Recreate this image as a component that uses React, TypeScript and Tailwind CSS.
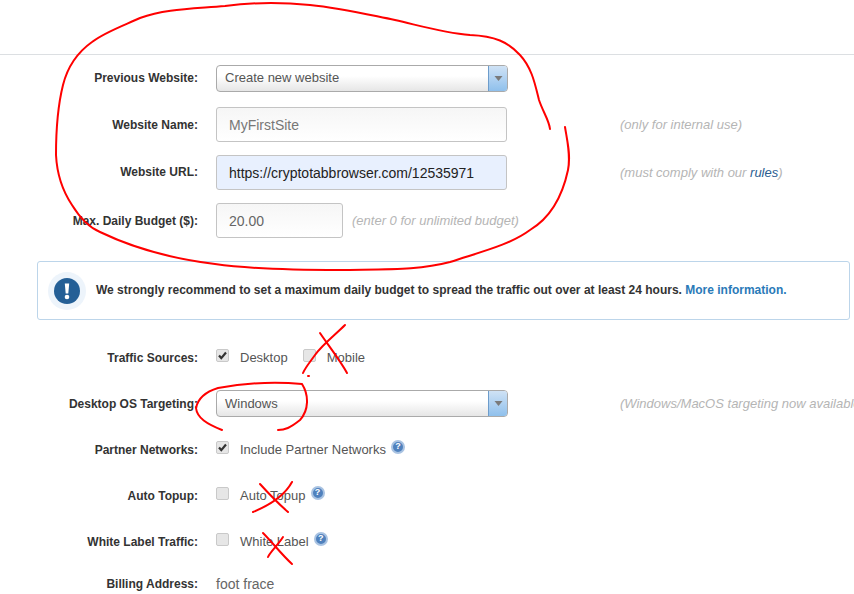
function Label({ children, className = "" }: { children: string; className?: string }) {
  return (
    <div className={`w-[198px] shrink-0 text-right text-[12px] font-bold text-[#333] ${className}`}>{children}</div>
  );
}

function Hint({ children, className }: { children: React.ReactNode; className: string }) {
  return <div className={`shrink-0 whitespace-nowrap text-[13px] italic text-[#b5b5b5] ${className}`}>{children}</div>;
}

function Select({ value, leading }: { value: string; leading: string }) {
  return (
    <div className="ml-[18px] flex h-[27px] w-[292px] shrink-0 overflow-hidden rounded-[4px] border border-[#aaa] bg-gradient-to-b from-white from-40% to-[#e6e6e6] text-[13px] text-[#555]">
      <div className={`flex-1 pl-[8px] ${leading}`}>{value}</div>
      <div className="flex w-[19px] items-center justify-center border-l border-[#6d9ccb] bg-gradient-to-b from-[#cfe2f5] to-[#8fc0ec]">
        <svg width="9" height="7" viewBox="0 0 9 7">
          <path d="M0.5 1h8L4.5 6z" fill="#7a7a7a" />
        </svg>
      </div>
    </div>
  );
}

function Input({ value, className }: { value: string; className: string }) {
  return (
    <div className={`ml-[18px] h-[35px] shrink-0 rounded-[3px] border border-[#c4c4c4] pl-[12px] text-[14px] leading-[35px] ${className}`}>
      {value}
    </div>
  );
}

function Check({ checked, className = "ml-[18px]" }: { checked?: boolean; className?: string }) {
  return (
    <span className={`mb-[5px] flex h-[13px] w-[13px] shrink-0 items-center justify-center rounded-[2px] border border-[#c9c9c9] bg-[#e6e6e6] ${className}`}>
      {checked && (
        <svg width="11" height="11" viewBox="0 0 11 11">
          <path d="M2 5.5l2.3 2.6L9 2.5" fill="none" stroke="#333" strokeWidth="2.2" />
        </svg>
      )}
    </span>
  );
}

function Help() {
  return (
    <span className="mb-[7px] ml-[5px] flex h-[14px] w-[14px] shrink-0 items-center justify-center rounded-full border-2 border-[#a9c3e2] bg-[#4f81bd] text-[9px] leading-none font-bold text-white">
      ?
    </span>
  );
}

function CheckRow({
  label,
  text,
  checked,
  mt
}: {
  label: string;
  text: string;
  checked?: boolean;
  mt: string;
}) {
  return (
    <div className={`flex h-[20px] items-center ${mt}`}>
      <Label>{label}</Label>
      <Check checked={checked} />
      <span className="ml-[11px] text-[13px] text-[#555]">{text}</span>
      <Help />
    </div>
  );
}

export default function App() {
  return (
    <div className="relative h-[594px] w-[854px] overflow-hidden bg-white font-['Liberation_Sans',Arial,sans-serif]">
      <div className="h-[55px] border-b border-[#dcdfe2]" />

      <div className="mt-[10px] flex items-center">
        <Label className="pb-[2px]">Previous Website:</Label>
        <Select value="Create new website" leading="leading-[24px]" />
      </div>

      <div className="mt-[15px] flex items-center">
        <Label>Website Name:</Label>
        <Input value="MyFirstSite" className="w-[291px] bg-gradient-to-b from-[#f6f6f6] to-white text-[#777]" />
        <Hint className="ml-[113px]">(only for internal use)</Hint>
      </div>

      <div className="mt-[13px] flex items-center">
        <Label className="pb-[2px]">Website URL:</Label>
        <Input value="https://cryptotabbrowser.com/12535971" className="w-[291px] bg-[#e8f0fe] text-[#222]" />
        <Hint className="ml-[113px]">
          (must comply with our <span className="text-[#2a5d8f]">rules</span>)
        </Hint>
      </div>

      <div className="mt-[13px] flex items-center">
        <Label>Max. Daily Budget ($):</Label>
        <Input value="20.00" className="w-[127px] bg-gradient-to-b from-[#f6f6f6] to-white text-[#666]" />
        <Hint className="ml-[9px]">(enter 0 for unlimited budget)</Hint>
      </div>

      <div className="mt-[23px] ml-[37px] flex h-[59px] w-[813px] items-center rounded-[3px] border border-[#bcd5ea] pl-[10px]">
        <div className="flex h-[38px] w-[38px] shrink-0 items-center justify-center rounded-full bg-[#edf4fb]">
          <div className="flex h-[26px] w-[26px] items-center justify-center rounded-full bg-[#245f96]">
            <svg width="6" height="18" viewBox="0 0 6 18">
              <path d="M0.8 1.5h4.4L4.3 11.5H1.7z" fill="#fff" />
              <circle cx="3" cy="15" r="2.3" fill="#fff" />
            </svg>
          </div>
        </div>
        <div className="ml-[10px] pb-[2px] text-[12px] font-bold whitespace-nowrap text-[#333]">
          We strongly recommend to set a maximum daily budget to spread the traffic out over at least 24 hours.{" "}
          <span className="text-[#2a7ab8]">More information.</span>
        </div>
      </div>

      <div className="mt-[28px] flex h-[20px] items-center">
        <Label>Traffic Sources:</Label>
        <Check checked />
        <span className="ml-[11px] text-[13px] text-[#555]">Desktop</span>
        <Check className="ml-[15px]" />
        <span className="ml-[11px] text-[13px] text-[#555]">Mobile</span>
      </div>

      <div className="mt-[22px] flex items-center">
        <Label>Desktop OS Targeting:</Label>
        <Select value="Windows" leading="leading-[25px]" />
        <Hint className="ml-[112px]">(Windows/MacOS targeting now available)</Hint>
      </div>

      <CheckRow mt="mt-[23px]" label="Partner Networks:" text="Include Partner Networks" checked />
      <CheckRow mt="mt-[26px]" label="Auto Topup:" text="Auto Topup" />
      <CheckRow mt="mt-[26px]" label="White Label Traffic:" text="White Label" />

      <div className="mt-[22px] flex h-[20px] items-center">
        <Label>Billing Address:</Label>
        <span className="ml-[18px] text-[14px] text-[#666]">foot frace</span>
      </div>

      {/* marker scribbles drawn over the form */}
      <svg className="pointer-events-none absolute top-0 left-0" width="854" height="594" viewBox="0 0 854 594" fill="none" stroke="#f00" strokeWidth="2" strokeLinejoin="round" strokeLinecap="round">
        <path d="M550 129C549 120 543 112 539 100C535 84 532 68 520 55C508 42 495 36 470 35C445 33 425 27 395 20C365 14 340 8 310 5C280 2 255 2 225 6C190 9 165 9 140 18C125 25 105 32 92 42C78 52 68 65 63 85C58 105 56 130 56 155C57 175 62 190 72 205C80 218 88 227 100 232C125 244 165 258 215 264C250 269 290 270 340 270C390 269 420 270 450 262C480 252 510 245 530 230C550 218 562 198 568 170C571 155 567 140 565 127" />
        <path d="M345 325C335 335 322 345 315 355C310 362 305 368 303 373M320 333C328 345 340 360 347 373" />
        <path d="M308 376h1" />
        <path d="M302 384C270 381 240 384 218 388C205 392 198 398 196 408C197 418 207 424 222 430M302 384C309 395 309 410 300 420C290 428 285 430 278 430" />
        <path d="M292 482C285 495 270 505 253 512M260 484C270 495 280 505 288 512" />
        <path d="M283 537C278 545 270 552 268 557M263 533C272 542 282 555 292 564" />
      </svg>
    </div>
  );
}
